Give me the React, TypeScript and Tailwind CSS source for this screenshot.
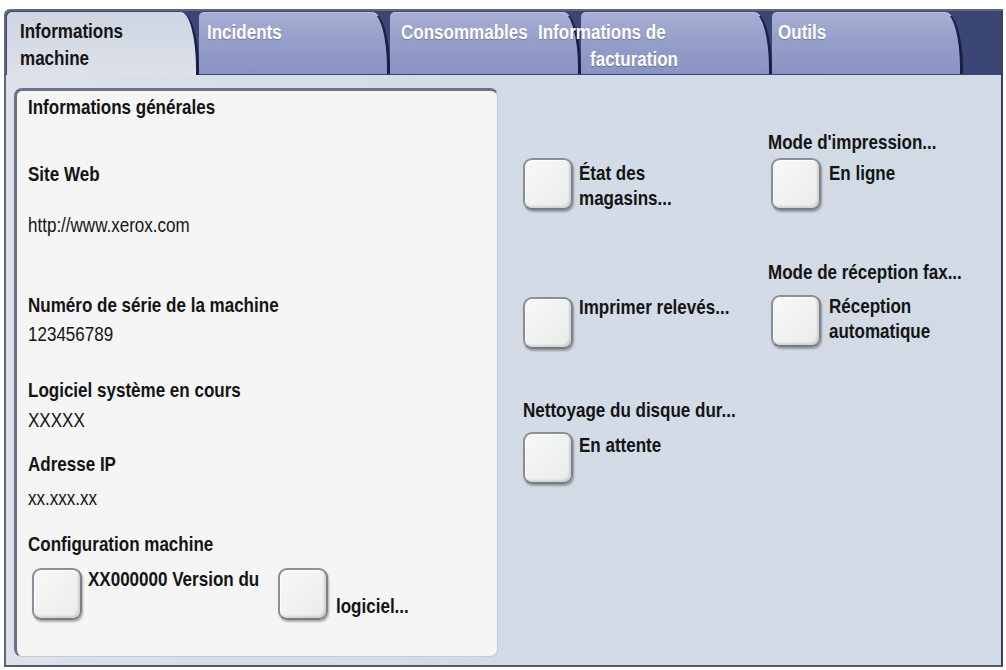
import React from "react";

const Btn = () => (
  <div className="h-[52px] w-[50px] shrink-0 rounded-[9px] border-2 border-[#8a8f98] border-b-[#767b84] border-r-[#7c818a] bg-linear-to-br from-[#f8f9f7] to-[#e9ece9] shadow-[inset_-2px_-2px_2px_rgba(0,0,0,0.12),inset_1px_1px_1px_rgba(255,255,255,0.9),1px_2px_2px_rgba(0,0,0,0.3)]" />
);

const T = ({ children, className = "" }: { children: React.ReactNode; className?: string }) => (
  <div className={"origin-left scale-x-[0.83] text-[20.5px] leading-[24px] text-[#141414] whitespace-nowrap " + className}>{children}</div>
);

const Item = ({
  lines,
  textMt,
  gap,
  className = "",
  btnClass = "",
}: {
  lines: string[];
  textMt: string;
  gap: string;
  className?: string;
  btnClass?: string;
}) => (
  <div className={"flex items-start " + className}>
    <div className={btnClass}>
      <Btn />
    </div>
    <div className={"origin-left scale-x-[0.83] font-bold text-[20.5px] leading-[25px] text-[#141414] whitespace-nowrap " + textMt + " " + gap}>
      {lines.map((l) => (
        <div key={l}>{l}</div>
      ))}
    </div>
  </div>
);

const tabInactive =
  "relative h-[62px] w-[191px] shrink-0 rounded-tl-[5px] rounded-tr-[18px_56px] border-r-[3px] border-t border-[#1b2043] border-t-[#bcc2de] bg-linear-to-b from-[#a7aed3] via-[#959ec9] to-[#8a93c3] pt-[5px]";
const tabLabel =
  "origin-left scale-x-[0.83] font-bold text-[20.5px] leading-[27px] text-white whitespace-nowrap [text-shadow:0_1px_1px_rgba(0,0,0,0.25)]";

export default function App() {
  return (
    <div className="h-[670px] w-[1006px] overflow-hidden bg-white pl-[4px] pt-[9px] font-['Liberation_Sans_Narrow','Arial_Narrow','Liberation_Sans',sans-serif]">
      <div className="flex h-[658px] w-[999px] flex-col overflow-hidden rounded-tl-[6px] border-2 border-[#62677a] border-r-[#3a3f58] border-b-[#55596a]">
        {/* Tab strip */}
        <div className="flex h-[64px] shrink-0 bg-[#3b4576] pt-[1px] pl-[1px]">
          <div className="relative h-[63px] w-[192px] shrink-0 rounded-tl-[5px] rounded-tr-[18px_56px] border-r-[3px] border-[#1b2043] bg-linear-to-b from-[#cfd5e1] to-[#dce1ea] pl-[13px] pt-[5px]">
            <div className="origin-left scale-x-[0.83] font-bold text-[20.5px] leading-[27px] text-[#141414] whitespace-nowrap">
              <div>Informations</div>
              <div>machine</div>
            </div>
          </div>
          <div className={tabInactive + " pl-[8px]"}>
            <div className={tabLabel}>Incidents</div>
          </div>
          <div className={tabInactive + " pl-[11px]"}>
            <div className={tabLabel}>Consommables</div>
          </div>
          <div className={tabInactive}>
            <div className={tabLabel + " -ml-[43px]"}>Informations de</div>
            <div className={tabLabel + " ml-[9px]"}>facturation</div>
          </div>
          <div className={tabInactive + " pl-[6px]"}>
            <div className={tabLabel}>Outils</div>
          </div>
        </div>

        {/* Content */}
        <div className="flex flex-1 items-start bg-linear-to-r from-[#dce1ea] via-[#d3dbe7] to-[#d2dae6] pl-[8px]">
          {/* Left panel */}
          <div className="mt-[13px] h-[569px] w-[484px] shrink-0 rounded-[8px] border-t-[3px] border-l-[3px] border-r border-b border-t-[#6c7284] border-l-[#6c7284] border-r-[#c6ccd6] border-b-[#c6ccd6] bg-[#f5f5f5] pl-[11px] pt-[4px]">
            <T className="font-bold">Informations générales</T>
            <T className="mt-[43px] font-bold">Site Web</T>
            <T className="mt-[27px]">http://www.xerox.com</T>
            <T className="mt-[56px] font-bold">Numéro de série de la machine</T>
            <T className="mt-[5px]">123456789</T>
            <T className="mt-[32px] font-bold">Logiciel système en cours</T>
            <T className="mt-[6px]">XXXXX</T>
            <T className="mt-[20px] font-bold">Adresse IP</T>
            <T className="mt-[10px]">xx.xxx.xx</T>
            <T className="mt-[22px] font-bold">Configuration machine</T>
            <div className="ml-[4px] mt-[12px] flex items-start">
              <Btn />
              <div className="-mt-[1px] ml-[6px] w-[190px] origin-left scale-x-[0.83] whitespace-nowrap text-[20.5px] font-bold leading-[24px] text-[#141414]">
                XX000000 Version du
              </div>
              <Btn />
              <div className="ml-[8px] mt-[26px] origin-left scale-x-[0.83] whitespace-nowrap text-[20.5px] font-bold leading-[24px] text-[#141414]">logiciel...</div>
            </div>
          </div>

          {/* Right area */}
          <div className="ml-[25px] flex items-start">
            <div className="flex w-[245px] flex-col">
              <Item lines={["État des", "magasins..."]} className="mt-[83px]" textMt="mt-[2px]" gap="ml-[6px]" />
              <Item lines={["Imprimer relevés..."]} className="mt-[87px]" textMt="-mt-[3px]" gap="ml-[6px]" />
              <T className="mt-[49px] font-bold">Nettoyage du disque dur...</T>
              <Item lines={["En attente"]} className="mt-[10px]" textMt="mt-[0px]" gap="ml-[6px]" />
            </div>
            <div className="flex flex-col">
              <T className="mt-[55px] font-bold">Mode d'impression...</T>
              <Item lines={["En ligne"]} className="mt-[4px]" btnClass="ml-[3px]" textMt="mt-[2px]" gap="ml-[8px]" />
              <T className="mt-[50px] font-bold">Mode de réception fax...</T>
              <Item lines={["Réception", "automatique"]} className="mt-[11px]" btnClass="ml-[3px]" textMt="-mt-[2px]" gap="ml-[8px]" />
            </div>
          </div>
        </div>
      </div>
    </div>
  );
}
